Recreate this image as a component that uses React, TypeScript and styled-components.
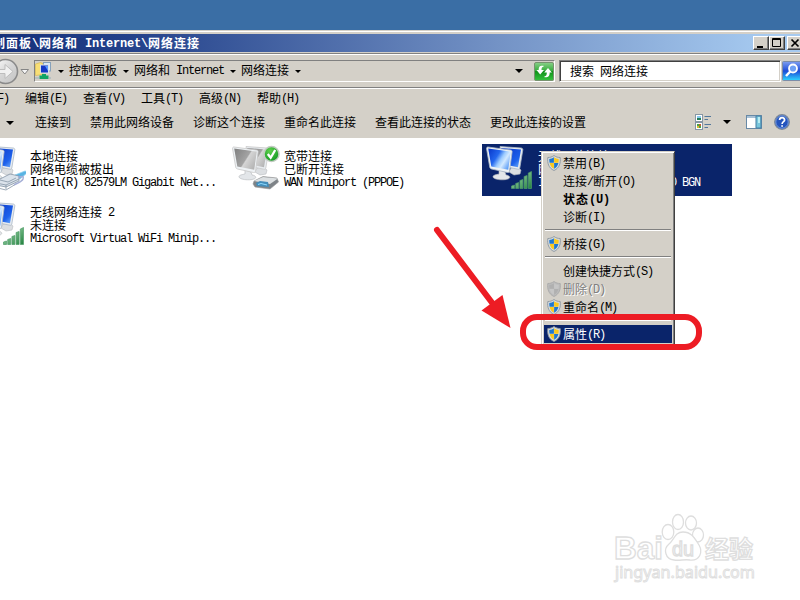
import React from 'react';
import styled, { createGlobalStyle, css } from 'styled-components';

const face = '#d4d0c8';
const navy = '#0a246a';

const GlobalStyle = createGlobalStyle`
  html, body { margin: 0; padding: 0; overflow: hidden; background: #3a6ea5; }
  * { box-sizing: border-box; }
  svg { display: block; flex: none; }
`;

const Screen = styled.div`
  position: relative;
  width: 800px;
  height: 600px;
  overflow: hidden;
  padding-top: 30px;
  background: #3a6ea5;
  color: #000;
  font: 12px/13px 'Noto Sans CJK SC', 'Noto Sans', sans-serif;
`;

const Window = styled.div`
  display: flex;
  flex-direction: column;
  height: 570px;
  background: ${face};
`;

const TitleFrame = styled.div`
  height: 25px;
  padding: 2px 0 1px;
  border-top: 1px solid ${face};
  box-shadow: inset 0 1px #fff, inset 0 -1px #fff, inset 0 -2px #808080;
  flex: none;
`;

const TitleBar = styled.div`
  display: flex;
  align-items: center;
  justify-content: space-between;
  height: 18px;
  margin-top: 1px;
  background: linear-gradient(90deg, #16317a, #23418a 16%, #7392c5 62%, #a6caf0 96%);
`;

const Title = styled.div`
  margin-left: -20px;
  color: #fff;
  font-weight: 700;
  line-height: 18px;
  letter-spacing: 1px;
  white-space: pre;
`;

const WindowButtons = styled.div`
  display: flex;
  width: 47px;
  flex: none;
`;

const WindowButton = styled.div<{ $gap?: boolean }>`
  width: 16px;
  height: 14px;
  flex: none;
  margin-left: ${(p) => (p.$gap ? '2px' : '0')};
  background: ${face};
  border: 1px solid;
  border-color: #fff #404040 #404040 #fff;
  box-shadow: inset -1px -1px #808080;
`;

const LatinRun = styled.span<{ $bold?: boolean }>`
  font-family: 'Liberation Mono', monospace;
  font-size: 12px;
  line-height: 0;
  vertical-align: 1px;
  letter-spacing: ${(p) => (p.$bold ? '-0.2px' : '-1.2px')};
`;

function Mixed({ children, wide }: { children: string; wide?: boolean }) {
  const runs = children.match(/[\x20-\x7e]+|[^\x20-\x7e]+/g) ?? [];
  return (
    <>
      {runs.map((run, i) =>
        /^[\x20-\x7e]/.test(run) ? <LatinRun key={i} $bold={wide}>{run}</LatinRun> : run,
      )}
    </>
  );
}

const AddressBar = styled.div`
  display: flex;
  align-items: flex-start;
  height: 34px;
  padding-top: 5px;
  flex: none;
  border-bottom: 1px solid #fff;
  box-shadow: inset 0 -1px #808080;
`;

const NavSlot = styled.div`
  display: flex;
  width: 34px;
  height: 28px;
  margin-top: -2px;
  flex: none;
`;

const AddressField = styled.div`
  display: flex;
  align-items: center;
  justify-content: space-between;
  width: 521px;
  height: 22px;
  border: 1px solid;
  border-color: #808080 #fff #fff #808080;
  flex: none;
`;

const Crumbs = styled.div`
  display: flex;
  align-items: center;
  height: 20px;
`;

const Crumb = styled.div`
  white-space: pre;
  line-height: 18px;
  margin-top: -3px;
`;

const Arrow = styled.div<{ $w?: number; $m?: string }>`
  width: 0;
  height: 0;
  flex: none;
  margin: ${(p) => p.$m ?? '0 5px'};
  border: ${(p) => p.$w ?? 3}px solid transparent;
  border-top-color: #000;
  border-bottom-width: 0;
`;

const Gap = styled.div`
  width: 12px;
  flex: none;
`;

const FieldEnd = styled.div`
  display: flex;
  align-items: center;
`;

const SearchField = styled.div`
  display: flex;
  align-items: center;
  width: 222px;
  height: 22px;
  margin-left: 4px;
  padding: 0 0 2px 10px;
  background: #fff;
  border: 1px solid;
  border-color: #808080 #fff #fff #808080;
  box-shadow: inset 1px 1px #404040, inset -1px -1px ${face};
  white-space: pre;
  flex: none;
`;

const SearchButton = styled.div`
  margin: 1px 0 0 1px;
  flex: none;
`;

const MenuBar = styled.div`
  display: flex;
  gap: 16px;
  height: 19px;
  flex: none;
  line-height: 18px;
`;

const MenuEntry = styled.div<{ $first?: boolean }>`
  width: 42px;
  flex: none;
  white-space: pre;
  margin-left: ${(p) => (p.$first ? '-33px' : '0')};
`;

const CommandBar = styled.div`
  display: flex;
  align-items: center;
  height: 30px;
  flex: none;
`;

const Commands = styled.div`
  display: flex;
  align-items: center;
  flex: 1;
  line-height: 16px;
`;

const Command = styled.div`
  margin: -3px 19px 0 0;
  white-space: nowrap;
`;

const ViewTools = styled.div`
  display: flex;
  align-items: center;
  width: 105px;
  margin-top: -2px;
`;

const Content = styled.div`
  display: grid;
  grid-template-columns: repeat(3, 250px);
  grid-auto-rows: 52px;
  gap: 4px;
  flex: 1;
  align-content: start;
  padding-top: 6px;
  background: #fff;
`;

const Connection = styled.div<{ $selected?: boolean }>`
  display: flex;
  width: 250px;
  height: 52px;
  padding: 0 0 0 4px;
  margin-left: -26px;
  ${(p) => p.$selected && css`
    background: ${navy};
    color: #fff;
  `}
`;

const ConnectionText = styled.div`
  margin: 5px 0 0 4px;
  white-space: pre;
`;

const ConnectionLine = styled.div`
  height: 13px;
  line-height: 13px;
`;

const ContextMenu = styled.div`
  position: absolute;
  left: 541px;
  top: 151px;
  width: 134px;
  height: 195px;
  padding: 2px;
  background: ${face};
  border: 1px solid;
  border-color: ${face} #404040 #404040 ${face};
  box-shadow: inset 1px 1px #fff, inset -1px -1px #808080;
`;

const MenuItem = styled.div<{ $active?: boolean; $disabled?: boolean; $bold?: boolean }>`
  display: flex;
  align-items: center;
  height: 18px;
  line-height: 18px;
  padding-left: 3px;
  white-space: pre;
  font-weight: ${(p) => (p.$bold ? 700 : 400)};
  letter-spacing: ${(p) => (p.$bold ? '1px' : '0')};
  ${(p) => p.$active && css`
    background: ${navy};
    color: #fff;
  `}
  ${(p) => p.$disabled && css`
    color: #808080;
    text-shadow: 1px 1px #fff;
  `}
`;

const MenuIcon = styled.div`
  width: 16px;
  flex: none;
`;

const MenuLabel = styled.div`
  margin-top: -1px;
`;

const Separator = styled.div`
  height: 2px;
  margin: 3px 1px 4px;
  border-top: 1px solid #808080;
  border-bottom: 1px solid #fff;
`;

const Highlight = styled.div`
  position: absolute;
  left: 520px;
  top: 314px;
  width: 182px;
  height: 36px;
  border: 6px solid #ed1c24;
  border-radius: 17px;
`;

const ArrowLayer = styled.div`
  position: absolute;
  left: 430px;
  top: 222px;
`;

const Watermark = styled.div`
  position: absolute;
  left: 608px;
  top: 508px;
`;

const GradientDefs = styled.svg`
  position: absolute;
  width: 0;
  height: 0;
`;

function Gradients() {
  return (
    <GradientDefs>
      <defs>
        <linearGradient id="blueScreen" x1="0" y1=".2" x2="1" y2=".8">
          <stop offset="0" stopColor="#0d3fd0" />
          <stop offset=".35" stopColor="#2367ee" />
          <stop offset=".55" stopColor="#9ccbff" />
          <stop offset=".7" stopColor="#d3e9ff" />
          <stop offset="1" stopColor="#4c93f5" />
        </linearGradient>
        <linearGradient id="blueBack" x1="0" y1="0" x2="1" y2="1">
          <stop offset="0" stopColor="#0a33c4" />
          <stop offset=".7" stopColor="#1d62ec" />
          <stop offset="1" stopColor="#79b6fb" />
        </linearGradient>
        <linearGradient id="greyScreen" x1="0" y1=".2" x2="1" y2=".8">
          <stop offset="0" stopColor="#858585" />
          <stop offset=".5" stopColor="#a3a3a3" />
          <stop offset=".55" stopColor="#d5d5d5" />
          <stop offset="1" stopColor="#b0b0b0" />
        </linearGradient>
        <linearGradient id="barGreen" x1="0" y1="0" x2="1" y2="1">
          <stop offset="0" stopColor="#b5e6bb" />
          <stop offset="1" stopColor="#22813f" />
        </linearGradient>
        <radialGradient id="okGreen" cx=".4" cy=".3" r=".8">
          <stop offset="0" stopColor="#5fd04c" />
          <stop offset="1" stopColor="#0a9320" />
        </radialGradient>
        <linearGradient id="navFace" x1="0" y1="0" x2="1" y2="1">
          <stop offset="0" stopColor="#fff" />
          <stop offset=".5" stopColor="#d6d6d6" />
          <stop offset="1" stopColor="#c2c2c2" />
        </linearGradient>
        <linearGradient id="refreshFace" x1="0" y1="0" x2="0" y2="1">
          <stop offset="0" stopColor="#8ad08a" />
          <stop offset=".45" stopColor="#37ae3d" />
          <stop offset=".5" stopColor="#109119" />
          <stop offset="1" stopColor="#35c43e" />
        </linearGradient>
        <linearGradient id="searchFace" x1="0" y1="0" x2="0" y2="1">
          <stop offset="0" stopColor="#7f9ef0" />
          <stop offset=".5" stopColor="#1c4cd8" />
          <stop offset="1" stopColor="#2ed6ff" />
        </linearGradient>
      </defs>
    </GradientDefs>
  );
}

type Badge = 'cable' | 'modem' | 'signal';

function ConnectionIcon({ badge, grey }: { badge: Badge; grey?: boolean }) {
  const edge = grey ? '#c9c9c9' : '#a9b7c6';
  return (
    <svg width="48" height="48" viewBox="0 0 48 48">
      <path d="M25 24l6-1 4 3-1 4-6 1-5-3z" fill="#dcdfe2" stroke="#b8bcc0" strokeWidth=".6" />
      <path d="M14 2.500l21 1.500c1.200 0 2 1 1.800 2l-3 18c-.2 1-1 1.500-2 1.200l-15-3z" fill="#e8ecf0" stroke={edge} strokeWidth=".8" />
      <path d="M15 4l20 1.500-3 17.800-14-3z" fill={grey ? 'url(#greyScreen)' : 'url(#blueBack)'} />
      <path d="M13 26l6 2 1 3c4 .5 5 3 2 4-5 1.800-15 .5-15-2.200 0-2 4-2.300 6-2.800z" fill="#e3e6e9" stroke="#b3b7bb" strokeWidth=".6" />
      <path d="M2 3l22.500 3c1.200.1 1.800 1 1.600 2l-2.600 19c-.2 1.200-1 1.700-2 1.500L5.500 25c-1-.2-1.700-1-1.800-2L.6 5C.4 3.600 1 2.900 2 3z" fill="#eef2f5" stroke={edge} strokeWidth=".8" />
      <path d="M2.200 4.600l22.600 3-2.600 18.200L5.300 22.600z" fill={grey ? 'url(#greyScreen)' : 'url(#blueScreen)'} />
      {badge === 'signal' && (
        <g fill="url(#barGreen)" stroke="#4f9c68" strokeWidth=".7">
          <path d="M25.500 42l3-1v3.500h-3zM29.700 39.500l3-1v6h-3zM33.900 36.500l3-1v9h-3zM38.100 32.500l3-1v13h-3zM42.300 29l3.200-1.500v17h-3.200z" />
        </g>
      )}
      {badge === 'cable' && (
        <g stroke="#8494a5" strokeWidth=".8">
          <path d="M37 31l10-4 3 1-8 7z" fill="#59b4e3" stroke="#8fcfee" />
          <path d="M20 36l12-6 9 2v5L28 43l-10-2z" fill="#dbe3eb" />
          <path d="M18 39l10 2 13-6M22 36l8 2 8-4M28 41v4M20 41v3l8 2 10-6" fill="none" />
          <path d="M40 33c4 0 6-2 5 2-1 3-6 4-9 6" fill="none" stroke="#a5afd6" strokeWidth="1.500" />
        </g>
      )}
      {badge === 'modem' && (
        <g>
          <path d="M22 37l9-4.500 14 1.500 1.500 4-8.500 7-15-2-2-3z" fill="#7d8387" stroke="#999" strokeWidth=".6" />
          <path d="M22 37l9-4 15 1.500-8 5.500z" fill="#dce0e2" />
          <path d="M24 39l4-2 8 1 1 5-12-1z" fill="#438dba" />
          <path d="M26 40.500l3-1 6 1.500" stroke="#8edbff" fill="none" />
          <circle cx="39.500" cy="10" r="7.500" fill="url(#okGreen)" stroke="#c3cbc2" strokeWidth="1.500" />
          <path d="M35.800 10l2.900 3.800L43.200 6" fill="none" stroke="#fff" strokeWidth="2.300" />
        </g>
      )}
    </svg>
  );
}

function Shield({ grey }: { grey?: boolean }) {
  const blue = grey ? '#b0b0b0' : '#1f78cf';
  const gold = grey ? '#c6c6c6' : '#fbc91c';
  return (
    <svg width="14" height="16" viewBox="0 0 14 16">
      <path d="M7 .5C5 2 3 2.500.8 2.500.2 8 1.500 13 7 15.500 12.500 13 13.800 8 13.200 2.500 11 2.500 9 2 7 .5z" fill={grey ? '#bcbcbc' : '#d5dbe0'} stroke={grey ? '#a9a9a9' : '#8b959e'} strokeWidth=".9" />
      <path d="M6.900 2.300C5.500 3.300 4 3.800 2.300 3.900c-.1 1.500 0 2.600.3 3.900h4.300z" fill={blue} />
      <path d="M7.100 2.300c1.400 1 2.900 1.500 4.600 1.600.1 1.500 0 2.600-.3 3.900H7.100z" fill={gold} />
      <path d="M2.600 8c.6 2.600 2 4.500 4.300 5.800V8z" fill={gold} />
      <path d="M11.400 8c-.6 2.600-2 4.500-4.300 5.800V8z" fill={blue} />
    </svg>
  );
}

function NavIcon() {
  return (
    <svg width="34" height="28" viewBox="0 0 34 28">
      <circle cx="5.500" cy="13.500" r="12" fill="url(#navFace)" stroke="#8a8a8a" strokeWidth="1.600" />
      <path d="M-3 11.500h8V6.500l8 7-8 7v-5h-8z" fill="#f1f1f1" stroke="#bdbdbd" />
      <path d="M21 11.500h7.500l-3.700 4.500z" fill="#f5f5f5" stroke="#858585" />
    </svg>
  );
}

function NetworkFolderIcon() {
  return (
    <svg width="17" height="18" viewBox="0 0 17 18">
      <path d="M.5 2l5-1.500 2.500 1v11l-7.500 1z" fill="#f8df76" stroke="#d6b545" strokeWidth=".6" />
      <rect x="8.500" y=".5" width="7" height="8.500" fill="#d8e8f6" stroke="#87a2bb" />
      <rect x="5.500" y="3" width="8" height="8" fill="#1639c5" stroke="#d6e0e8" />
      <path d="M10 4h3v5z" fill="#5596ff" />
      <path d="M7 12h4v1.500h2.500V17h-9v-3.500H7z" fill="#10a564" />
      <path d="M0 16h4.500M13.500 16H16" stroke="#9ab1bb" />
    </svg>
  );
}

function RefreshIcon() {
  return (
    <svg width="20" height="19" viewBox="0 0 20 19">
      <rect x=".5" y=".5" width="19" height="18" rx="1.500" fill="url(#refreshFace)" stroke="#77936f" />
      <path d="M9.500 3.800C5.500 3.500 4.700 5 4.700 8H2.500l3.700 4.500L10 8H7.500c0-2 .4-3 2-3.200z" fill="#fff" />
      <path d="M10.500 15.300c4 .3 5.200-1.300 5.200-4.800h2.200L14 6l-3.800 4.500h2.600c0 2.500-.4 3.500-2.300 3.800z" fill="#fff" />
    </svg>
  );
}

function SearchIcon() {
  return (
    <svg width="20" height="20" viewBox="0 0 20 20">
      <rect x=".5" y=".5" width="22" height="19" rx="1" fill="url(#searchFace)" stroke="#7c8ca8" />
      <circle cx="11" cy="7.500" r="4" fill="#6fa0f4" stroke="#fff" strokeWidth="1.800" />
      <path d="M8.200 10.500L4 15" stroke="#fff" strokeWidth="2.500" />
    </svg>
  );
}

function ViewIcon() {
  return (
    <svg width="17" height="17" viewBox="0 0 17 17">
      <rect x=".5" y=".5" width="7" height="7" fill="#fff" stroke="#8796a4" />
      <path d="M2 2h4v2H2z" fill="#88c9ef" /><path d="M2 4h4v2H2z" fill="#287d58" />
      <rect x=".5" y="8.500" width="7" height="7" fill="#fff" stroke="#8796a4" />
      <path d="M2 10h2v2H2zM4 12h2v2H4z" fill="#45a842" /><path d="M4 10h2v2H4z" fill="#c35b30" /><path d="M2 12h2v2H2z" fill="#ddb634" />
      <path d="M9.500 2.500H16M9.500 5.500H13M9.500 10.500H16M9.500 13.500H13" stroke="#53779b" />
    </svg>
  );
}

function PaneIcon() {
  return (
    <svg width="16" height="14" viewBox="0 0 16 14">
      <rect x=".5" y=".5" width="15" height="13" fill="#fff" stroke="#6889a6" />
      <path d="M1 1h14v2H1z" fill="#a7c0d5" />
      <path d="M10 1h5v12h-5z" fill="#79c6dc" stroke="#457ea4" />
      <path d="M12 2h2v6h-2z" fill="#b9edf3" />
    </svg>
  );
}

function HelpIcon() {
  return (
    <svg width="16" height="16" viewBox="0 0 16 16">
      <circle cx="8" cy="8" r="7.300" fill="#2454bd" stroke="#7d8998" strokeWidth="1.300" />
      <circle cx="8" cy="8" r="6.200" fill="none" stroke="#8daee8" strokeWidth=".7" />
      <path d="M5.600 6c0-3.200 5-3.200 5 0 0 1.700-2.500 1.700-2.500 4M8.100 11.200v1.500" fill="none" stroke="#fff" strokeWidth="1.700" />
    </svg>
  );
}

function MenuRow({ label, shield, active, disabled, bold }: {
  label: string; shield?: boolean; active?: boolean; disabled?: boolean; bold?: boolean;
}) {
  return (
    <MenuItem $active={active} $disabled={disabled} $bold={bold}>
      <MenuIcon>{shield && <Shield grey={disabled} />}</MenuIcon>
      <MenuLabel><Mixed wide={bold}>{label}</Mixed></MenuLabel>
    </MenuItem>
  );
}

function ConnectionTile({ lines, badge, grey, selected }: {
  lines: string[]; badge: Badge; grey?: boolean; selected?: boolean;
}) {
  return (
    <Connection $selected={selected}>
      <ConnectionIcon badge={badge} grey={grey} />
      <ConnectionText>
        {lines.map((line) => <ConnectionLine key={line}><Mixed>{line}</Mixed></ConnectionLine>)}
      </ConnectionText>
    </Connection>
  );
}

export default function App() {
  return (
    <Screen>
      <GlobalStyle />
      <Gradients />
      <Window>
        <TitleFrame>
          <TitleBar>
            <Title><Mixed wide>{'控制面板\\网络和 Internet\\网络连接'}</Mixed></Title>
            <WindowButtons>
              <WindowButton>
                <svg width="14" height="12"><path d="M3 9h6v2H3z" /></svg>
              </WindowButton>
              <WindowButton>
                <svg width="14" height="12"><path d="M2.500 1.500h8v8h-8zM2 2.500h9" fill="none" stroke="#000" /></svg>
              </WindowButton>
              <WindowButton $gap>
                <svg width="14" height="12"><path d="M3.500 2.500l7 7M10.500 2.500l-7 7" stroke="#000" strokeWidth="1.700" /></svg>
              </WindowButton>
            </WindowButtons>
          </TitleBar>
        </TitleFrame>
        <AddressBar>
          <NavSlot><NavIcon /></NavSlot>
          <AddressField>
            <Crumbs>
              <NetworkFolderIcon />
              <Arrow $m="0 5px 0 6px" />
              <Crumb>控制面板</Crumb>
              <Arrow $m="0 5px 0 6px" />
              <Crumb><Mixed>网络和 Internet</Mixed></Crumb>
              <Arrow $m="0 5px 0 6px" />
              <Crumb>网络连接</Crumb>
              <Arrow $m="0 5px 0 6px" />
            </Crumbs>
            <FieldEnd>
              <Arrow $w={4} $m="0 11px 0 0" />
              <RefreshIcon />
            </FieldEnd>
          </AddressField>
          <SearchField><Mixed>搜索 网络连接</Mixed></SearchField>
          <SearchButton><SearchIcon /></SearchButton>
        </AddressBar>
        <MenuBar>
          <MenuEntry $first><Mixed>文件(F)</Mixed></MenuEntry>
          <MenuEntry><Mixed>编辑(E)</Mixed></MenuEntry>
          <MenuEntry><Mixed>查看(V)</Mixed></MenuEntry>
          <MenuEntry><Mixed>工具(T)</Mixed></MenuEntry>
          <MenuEntry><Mixed>高级(N)</Mixed></MenuEntry>
          <MenuEntry><Mixed>帮助(H)</Mixed></MenuEntry>
        </MenuBar>
        <CommandBar>
          <Commands>
            <Arrow $w={4} $m="0 21px 0 6px" />
            <Command>连接到</Command>
            <Command>禁用此网络设备</Command>
            <Command>诊断这个连接</Command>
            <Command>重命名此连接</Command>
            <Command>查看此连接的状态</Command>
            <Command>更改此连接的设置</Command>
          </Commands>
          <ViewTools>
            <ViewIcon />
            <Arrow $w={4} $m="0 15px 0 11px" />
            <PaneIcon />
            <Gap />
            <HelpIcon />
          </ViewTools>
        </CommandBar>
        <Content>
          <ConnectionTile badge="cable" lines={['本地连接', '网络电缆被拔出', 'Intel(R) 82579LM Gigabit Net...']} />
          <ConnectionTile badge="modem" grey lines={['宽带连接', '已断开连接', 'WAN Miniport (PPPOE)']} />
          <ConnectionTile badge="signal" selected lines={['无线网络连接', '网络', 'Intel(R) WiFi Link 1000 BGN']} />
          <ConnectionTile badge="signal" lines={['无线网络连接 2', '未连接', 'Microsoft Virtual WiFi Minip...']} />
        </Content>
      </Window>

      <ContextMenu>
        <MenuRow label="禁用(B)" shield />
        <MenuRow label="连接/断开(O)" />
        <MenuRow label="状态(U)" bold />
        <MenuRow label="诊断(I)" />
        <Separator />
        <MenuRow label="桥接(G)" shield />
        <Separator />
        <MenuRow label="创建快捷方式(S)" />
        <MenuRow label="删除(D)" shield disabled />
        <MenuRow label="重命名(M)" shield />
        <Separator />
        <MenuRow label="属性(R)" shield active />
      </ContextMenu>

      <Highlight />
      <ArrowLayer>
        <svg width="86" height="110" viewBox="0 0 86 110">
          <path d="M7 8l56 74" stroke="#ed1c24" strokeWidth="6" strokeLinecap="round" />
          <path d="M80.500 106L51.500 88.500 72.500 73z" fill="#ed1c24" />
        </svg>
      </ArrowLayer>
      <Watermark>
        <svg width="160" height="80" viewBox="0 0 160 80" fill="#fff" stroke="#dedede" strokeWidth="1.300">
          <text x="6" y="51" fontFamily="Liberation Sans, sans-serif" fontWeight="700" fontSize="32" textLength="49" lengthAdjust="spacingAndGlyphs">Bai</text>
          <ellipse cx="60" cy="24" rx="5.800" ry="7.500" />
          <ellipse cx="70" cy="14" rx="5.500" ry="7.500" />
          <ellipse cx="83" cy="15" rx="5.500" ry="7" />
          <ellipse cx="90" cy="27" rx="5.500" ry="7" />
          <path d="M75 24c-8 0-9 8-14 12-6 5-4 15 5 16 6 1 10-1 16 0 10 1 13-8 9-15-4-6-7-13-16-13z" />
          <text x="64" y="48" fontFamily="Liberation Sans, sans-serif" fontSize="20" textLength="22" lengthAdjust="spacingAndGlyphs">du</text>
          <text x="97" y="50" fontFamily="Noto Sans CJK SC, sans-serif" fontWeight="700" fontSize="24">经验</text>
          <text x="7" y="70" fontFamily="Noto Sans, sans-serif" fontSize="17" strokeWidth="1" textLength="140" lengthAdjust="spacingAndGlyphs">jingyan.baidu.com</text>
        </svg>
      </Watermark>
    </Screen>
  );
}
